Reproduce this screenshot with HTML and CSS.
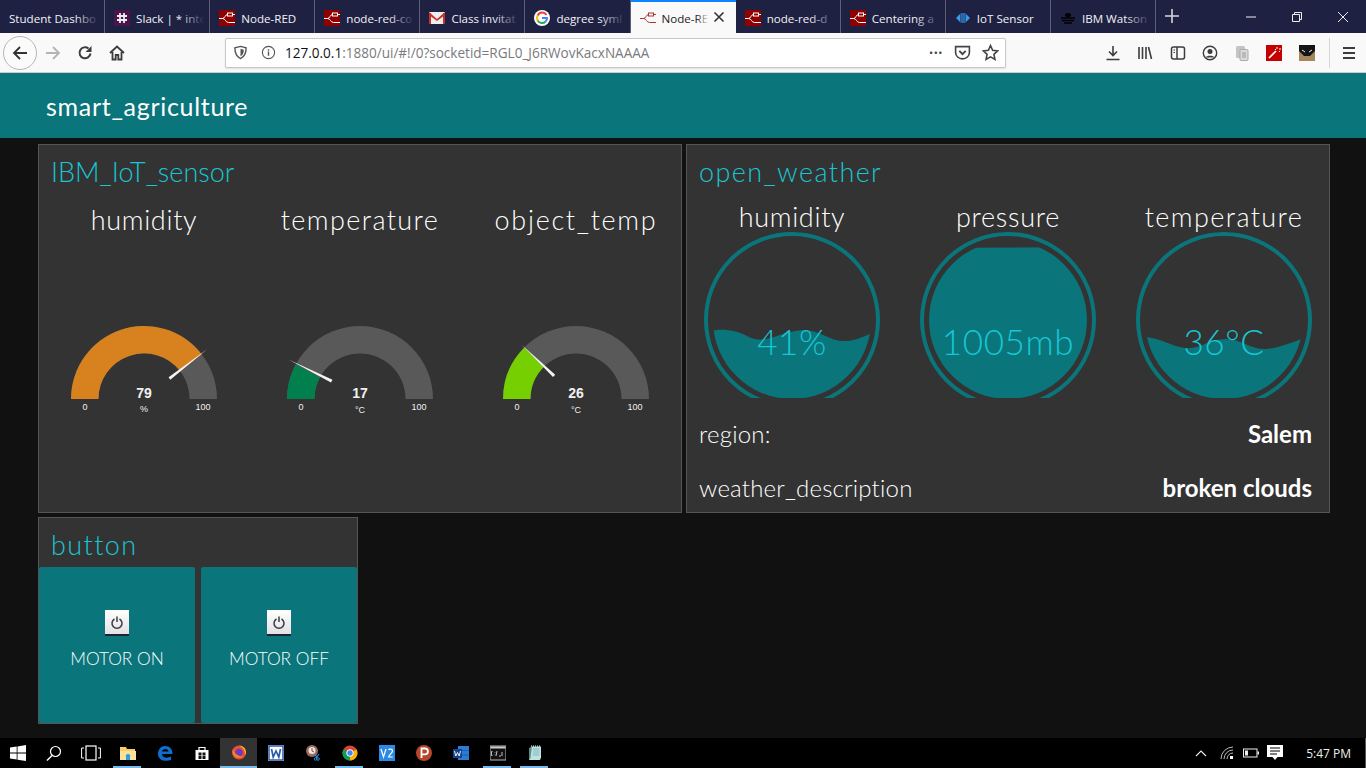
FILE: index.html
```html
<!DOCTYPE html>
<html lang="en">
<head>
    <meta charset="UTF-8">
    <meta name="viewport" content="width=device-width, initial-scale=1.0">
    <title>Node-RED Dashboard</title>
    <link rel="stylesheet" href="styles.css">
</head>

<body>
    <svg class="defs" width="0" height="0">
        <symbol id="nr" viewBox="0 0 16 16">
            <rect width="16" height="16" fill="#8f0000"/>
            <path d="M0 8.500h3.500C6 8.500 6 4.500 8.500 4.500M3.500 8.500c3 0 3 4 6 4H16M13 4.500h3" fill="none" stroke="#fff" stroke-width="1"/>
            <rect x="8.500" y="3" width="5" height="3" fill="none" stroke="#fff" stroke-width="1"/>
        </symbol>
        <symbol id="nr-light" viewBox="0 0 16 16">
            <path d="M0 8.500h3.500C6 8.500 6 4.500 8.500 4.500M3.500 8.500c3 0 3 4 6 4H16M13 4.500h3" fill="none" stroke="#a33" stroke-width="1"/>
            <rect x="8.500" y="3" width="5" height="3" fill="none" stroke="#a33" stroke-width="1"/>
        </symbol>
        <symbol id="power" viewBox="0 0 24 26">
            <rect width="24" height="24" fill="url(#btn)"/>
            <rect y="24" width="24" height="2" fill="#1c2433"/>
            <path d="M9.500 9a5 5 0 1 0 5 0" fill="none" stroke="#3c3c3c" stroke-width="1.500"/>
            <path d="M12 6.500v5.500" stroke="#3c3c3c" stroke-width="1.500"/>
        </symbol>
        <linearGradient id="btn" x1="0" y1="0" x2="0" y2="1">
            <stop offset="0" stop-color="#fff"/>
            <stop offset="1" stop-color="#e2e2e6"/>
        </linearGradient>
    </svg>

    <!-- browser tabs -->
    <div class="tabbar">
        <div class="tab"><span class="tab-label">Student Dashbo</span></div>
        <div class="tab">
            <svg class="favicon" viewBox="0 0 16 16"><rect width="16" height="16" fill="#4a154b"/><path d="M6 3v10M10 3v10M3 6h10M3 10h10" stroke="#eee" stroke-width="1.800"/></svg>
            <span class="tab-label">Slack | * inte</span>
        </div>
        <div class="tab"><svg class="favicon"><use href="#nr"/></svg><span class="tab-label">Node-RED</span></div>
        <div class="tab"><svg class="favicon"><use href="#nr"/></svg><span class="tab-label">node-red-co</span></div>
        <div class="tab">
            <svg class="favicon" viewBox="0 0 16 16"><rect y="2" width="16" height="12" fill="#eee"/><path d="M0 2l8 7 8-7v3l-8 6-8-6z" fill="#c9302c"/><path d="M0 3h2v11H0zM14 3h2v11h-2z" fill="#c9302c"/></svg>
            <span class="tab-label">Class invitat</span>
        </div>
        <div class="tab">
            <svg class="favicon" viewBox="0 0 16 16"><circle cx="8" cy="8" r="8" fill="#fff"/><path d="M12.500 5A5 5 0 0 0 3.600 5.600" fill="none" stroke="#ea4335" stroke-width="2"/><path d="M3.600 5.600a5 5 0 0 0 0 4.800" fill="none" stroke="#fbbc05" stroke-width="2"/><path d="M3.600 10.400A5 5 0 0 0 11.600 11.500" fill="none" stroke="#34a853" stroke-width="2"/><path d="M8 8h5a5 5 0 0 1-1.400 3.500" fill="none" stroke="#4285f4" stroke-width="2"/></svg>
            <span class="tab-label">degree syml</span>
        </div>
        <div class="tab tab-active">
            <svg class="favicon"><use href="#nr-light"/></svg>
            <span class="tab-label">Node-RE</span>
            <svg class="tab-close" viewBox="0 0 12 12"><path d="M1.500 1.500l9 9M10.500 1.500l-9 9" stroke="#333" stroke-width="1.600"/></svg>
        </div>
        <div class="tab"><svg class="favicon"><use href="#nr"/></svg><span class="tab-label">node-red-d</span></div>
        <div class="tab"><svg class="favicon"><use href="#nr"/></svg><span class="tab-label">Centering a</span></div>
        <div class="tab">
            <svg class="favicon" viewBox="0 0 16 16"><path d="M1 8l4-4v8zM15 8l-4-4v8z" fill="#3b9be8"/><rect x="5.500" y="3" width="5" height="10" rx="1" fill="#2f8ee0"/><path d="M7 3v10M9 3v10" stroke="#1e2142" stroke-width=".7"/></svg>
            <span class="tab-label tab-full">IoT Sensor</span>
        </div>
        <div class="tab">
            <svg class="favicon" viewBox="0 0 16 16"><ellipse cx="8" cy="5" rx="3" ry="2" fill="#000"/><path d="M1 8h14M2 10.500h12M4 13h8" stroke="#000" stroke-width="1.600"/></svg>
            <span class="tab-label">IBM Watson</span>
        </div>
        <svg class="tab-new" viewBox="0 0 14 14"><path d="M7 0v14M0 7h14" stroke="#d8d8de" stroke-width="1.600"/></svg>
        <div class="win-controls">
            <svg viewBox="0 0 12 12"><path d="M1 6h10" stroke="#eee" stroke-width="1"/></svg>
            <svg viewBox="0 0 12 12"><path d="M1.500 3.500h7v7h-7zM3.500 3.500v-2h7v7h-2" fill="none" stroke="#eee" stroke-width="1"/></svg>
            <svg viewBox="0 0 12 12"><path d="M1 1l10 10M11 1L1 11" stroke="#eee" stroke-width="1"/></svg>
        </div>
    </div>

    <!-- address bar row -->
    <div class="toolbar">
        <div class="nav-back">
            <svg viewBox="0 0 16 16"><path d="M15 8H2M8 2L2 8l6 6" fill="none" stroke="#333" stroke-width="1.800"/></svg>
        </div>
        <svg class="nav-icon" viewBox="0 0 16 16"><path d="M1 8h13M8 2l6 6-6 6" fill="none" stroke="#b4b4b6" stroke-width="1.800"/></svg>
        <svg class="nav-icon" viewBox="0 0 16 16"><path d="M13.500 8.500A5.500 5.500 0 1 1 11.500 3.500" fill="none" stroke="#3c3c3e" stroke-width="2"/><path d="M14.500 1v6h-6z" fill="#3c3c3e"/></svg>
        <svg class="nav-icon" viewBox="0 0 16 16"><path d="M1 8l7-6.500L15 8M3.500 7v7.500h3.200V10h2.600v4.500h3.200V7" fill="none" stroke="#3c3c3e" stroke-width="1.800"/></svg>

        <div class="urlbar">
            <svg class="url-shield" viewBox="0 0 16 16"><path d="M8 1.500l6 1.500c0 6-1.500 9.500-6 11.500C3.500 12.500 2 9 2 3z" fill="none" stroke="#555" stroke-width="1.500"/><path d="M8 4l3.500 1C11.500 8.500 10.500 10.500 8 12z" fill="#555"/></svg>
            <svg class="url-info" viewBox="0 0 16 16"><circle cx="8" cy="8" r="6.500" fill="none" stroke="#555" stroke-width="1.200"/><path d="M8 7v4.500M8 4.500v1.500" stroke="#555" stroke-width="1.500"/></svg>
            <span class="url-text"><span class="url-host">127.0.0.1</span>:1880/ui/#!/0?socketid=RGL0_J6RWovKacxNAAAA</span>
            <span class="url-dots">•••</span>
            <svg class="url-action" viewBox="0 0 16 16"><path d="M1.500 2.500h13V8a6.500 6 0 0 1-13 0z" fill="none" stroke="#444" stroke-width="1.500"/><path d="M5 6.500l3 3 3-3" fill="none" stroke="#444" stroke-width="1.800"/></svg>
            <svg class="url-action" viewBox="0 0 16 16"><path d="M8 1.500l2 4.500 4.800.5-3.600 3.200 1 4.800L8 12.100l-4.200 2.400 1-4.800L1.200 6.500 6 6z" fill="none" stroke="#444" stroke-width="1.500"/></svg>
        </div>

        <div class="tools">
            <svg viewBox="0 0 16 16"><path d="M8 1v9M4 6.500L8 10.500l4-4M1.500 14.500h13" fill="none" stroke="#3c3c3e" stroke-width="1.600"/></svg>
            <svg viewBox="0 0 16 16"><path d="M2 2v12M5.500 2v12M9 2v12M11.500 2l3 12" fill="none" stroke="#3c3c3e" stroke-width="1.600"/></svg>
            <svg viewBox="0 0 16 16"><rect x="1.500" y="2" width="13" height="12" rx="2" fill="none" stroke="#3c3c3e" stroke-width="1.500"/><path d="M7 2v12" stroke="#3c3c3e" stroke-width="1.500"/><path d="M3.500 5H5M3.500 7.500H5" stroke="#3c3c3e"/></svg>
            <svg viewBox="0 0 16 16"><circle cx="8" cy="8" r="6.700" fill="none" stroke="#3c3c3e" stroke-width="1.400"/><circle cx="8" cy="6.500" r="2.500" fill="#3c3c3e"/><path d="M3.500 12.500c1-2.500 8-2.500 9 0z" fill="#3c3c3e"/></svg>
            <svg viewBox="0 0 16 16"><rect x="2" y="1" width="9" height="12" rx="1.500" fill="#c4c4c4"/><rect x="6" y="4.500" width="8" height="11" rx="1" fill="#dadada" stroke="#aaa"/><path d="M8 8h4M8 10h4M8 12h4" stroke="#999"/></svg>
            <svg viewBox="0 0 16 16"><rect width="16" height="16" fill="#c40000"/><path d="M3 13l7-7" stroke="#fff" stroke-width="1.600"/><path d="M11 2v2M13 4h2M9 4l1 1M13 6l1 1" stroke="#fff"/></svg>
            <svg viewBox="0 0 16 16"><rect width="16" height="16" fill="#a5865c"/><path d="M0 0h16v6L11 11H5L0 6z" fill="#151515"/><path d="M3 5l3 2M13 5l-3 2" stroke="#eee" stroke-width="1"/></svg>
            <span class="tool-sep"></span>
            <svg viewBox="0 0 16 16"><path d="M2 3h12M2 8h12M2 13h12" stroke="#3c3c3e" stroke-width="1.800"/></svg>
        </div>
    </div>

    <!-- dashboard -->
    <header class="ui-header">smart_agriculture</header>

    <main class="ui-main">
        <section class="group">
            <h2 class="group-title title-tight">IBM_IoT_sensor</h2>
            <div class="widgets">
                <div class="gauge">
                    <div class="gauge-title title-tight">humidity</div>
                    <svg class="gauge-svg" viewBox="0 0 210 170">
                        <path class="arc-bg" d="M32 153a73 73 0 0 1 146 0h-27.500a45.500 45.500 0 0 0-91 0z"/>
                        <path d="M32 153a73 73 0 0 1 130.700-44.700l-21.700 16.800A45.500 45.500 0 0 0 59.500 153z" fill="#d7811f"/>
                        <path class="needle" d="M131.300 133.800l-1.700-2.500 38.500-28z"/>
                        <text class="g-value" x="105" y="152">79</text>
                        <text class="g-unit" x="105" y="166">%</text>
                        <text class="g-limit" x="46" y="164">0</text>
                        <text class="g-limit" x="164" y="164">100</text>
                    </svg>
                </div>
                <div class="gauge">
                    <div class="gauge-title">temperature</div>
                    <svg class="gauge-svg" viewBox="0 0 210 170">
                        <path class="arc-bg" d="M32 153a73 73 0 0 1 146 0h-27.500a45.500 45.500 0 0 0-91 0z"/>
                        <path d="M32 153a73 73 0 0 1 8.800-34.700l24 13.200A45.500 45.500 0 0 0 59.500 153z" fill="#017f4d"/>
                        <path class="needle" d="M76 136.500l1.500-2.800L34 113.800z"/>
                        <text class="g-value" x="105" y="152">17</text>
                        <text class="g-unit" x="105" y="167">°C</text>
                        <text class="g-limit" x="46" y="164">0</text>
                        <text class="g-limit" x="164" y="164">100</text>
                    </svg>
                </div>
                <div class="gauge">
                    <div class="gauge-title title-wide">object_temp</div>
                    <svg class="gauge-svg" viewBox="0 0 210 170">
                        <path class="arc-bg" d="M32 153a73 73 0 0 1 146 0h-27.500a45.500 45.500 0 0 0-91 0z"/>
                        <path d="M32 153a73 73 0 0 1 21.300-51.600l19.500 19.600A45.500 45.500 0 0 0 59.500 153z" fill="#76cf00"/>
                        <path class="needle" d="M82 131l2.200-2.200-33.600-30z"/>
                        <text class="g-value" x="105" y="152">26</text>
                        <text class="g-unit" x="105" y="167">°C</text>
                        <text class="g-limit" x="46" y="164">0</text>
                        <text class="g-limit" x="164" y="164">100</text>
                    </svg>
                </div>
            </div>
        </section>

        <section class="group">
            <h2 class="group-title">open_weather</h2>
            <div class="widgets">
                <div class="liquid">
                    <div class="liquid-title title-tight">humidity</div>
                    <svg class="liquid-svg" viewBox="0 0 210 166">
                        <clipPath id="clip-a"><circle cx="105" cy="88" r="79"/></clipPath>
                        <circle class="ring" cx="105" cy="88" r="86"/>
                        <path class="fill" clip-path="url(#clip-a)" d="M20 100C32 96 48 97 62 105C80 113 90 100 116 98C132 97 142 110 160 109C170 108 178 104 192 98L192 170L20 170Z"/>
                        <text class="l-value" x="105" y="123">41%</text>
                    </svg>
                </div>
                <div class="liquid">
                    <div class="liquid-title title-tight">pressure</div>
                    <svg class="liquid-svg" viewBox="0 0 210 166">
                        <clipPath id="clip-b"><circle cx="105" cy="88" r="79"/></clipPath>
                        <circle class="ring" cx="105" cy="88" r="86"/>
                        <path class="fill" clip-path="url(#clip-b)" d="M0 16L210 15L210 170L0 170Z"/>
                        <text class="l-value" x="105" y="123">1005mb</text>
                    </svg>
                </div>
                <div class="liquid">
                    <div class="liquid-title">temperature</div>
                    <svg class="liquid-svg" viewBox="0 0 210 166">
                        <clipPath id="clip-c"><circle cx="105" cy="88" r="79"/></clipPath>
                        <circle class="ring" cx="105" cy="88" r="86"/>
                        <path class="fill" clip-path="url(#clip-c)" d="M20 105C40 104 50 114 66 116C80 118 90 107 107 107C122 107 132 118 148 117C160 116 172 111 190 104L190 170L20 170Z"/>
                        <text class="l-value" x="105" y="123">36°C</text>
                    </svg>
                </div>
            </div>
            <div class="text-row"><span>region:</span><strong>Salem</strong></div>
            <div class="text-row"><span>weather_description</span><strong>broken clouds</strong></div>
        </section>

        <section class="group group-small">
            <h2 class="group-title">button</h2>
            <div class="buttons">
                <button class="motor-btn"><svg class="power-icon"><use href="#power"/></svg>MOTOR ON</button>
                <button class="motor-btn"><svg class="power-icon"><use href="#power"/></svg>MOTOR OFF</button>
            </div>
        </section>
    </main>

    <!-- windows taskbar -->
    <footer class="taskbar">
        <div class="task"><svg viewBox="0 0 16 16"><path d="M0 2.500l6.700-1v6H0zM7.500 1.400L16 0v7.500H7.500zM0 8.500h6.700v6L0 13.500zM7.500 8.500H16V16l-8.500-1.300z" fill="#fff"/></svg></div>
        <div class="task"><svg viewBox="0 0 16 16"><circle cx="9.500" cy="6.500" r="5" fill="none" stroke="#fff" stroke-width="1.200"/><path d="M6 10.500L1 15.500" stroke="#fff" stroke-width="1.400"/></svg></div>
        <div class="task task-view"><svg viewBox="0 0 20 16"><rect x="5" y="1" width="10" height="14" fill="none" stroke="#fff" stroke-width="1.200"/><path d="M3 3H.6v10H3M17 3h2.400v10H17" fill="none" stroke="#fff"/></svg></div>
        <div class="task task-open"><svg viewBox="0 0 16 16"><path d="M0 2h6l1 2h8v11H0z" fill="#f7cf62"/><path d="M0 6h16v9H0z" fill="#fbe29a"/><path d="M6 15v-4h4v4z" fill="#2d9fd8"/><path d="M5 11l3-2.500 3 2.500z" fill="#2d9fd8"/></svg></div>
        <div class="task"><svg viewBox="0 0 16 16"><path d="M8 1c5 0 7.500 3.500 7.500 8H5c0 4 5.500 4.500 9 2.500v3.500c-5.500 2-13 .5-13-6C1 4.500 4 1 8 1zM5 6.500h6.500C11.500 3 5.500 3 5 6.500z" fill="#0c6fd0"/></svg></div>
        <div class="task"><svg viewBox="0 0 16 16"><path d="M1.500 5h13v10h-13z" fill="#fff"/><path d="M5 5V2.500h6V5" fill="none" stroke="#fff" stroke-width="1.200"/><path d="M4.500 7.500h3v3h-3zM8.500 7.500h3v3h-3zM4.500 11h3v3h-3zM8.500 11h3v3h-3z" fill="#111"/></svg></div>
        <div class="task task-active"><svg viewBox="0 0 16 16"><circle cx="8" cy="8.500" r="7" fill="#e8522f"/><path d="M8 1.500c4 0 7 3 7 7 0 1-.2 2-.6 2.800C14 6 11.500 3 8 1.500z" fill="#ffb02e"/><circle cx="8" cy="8.500" r="3.800" fill="#6b3ac2"/><path d="M2 5c1 4 5 8 10 7-2 2-7 3-9.500-1C1.500 9 1.500 7 2 5z" fill="#f5842b"/></svg></div>
        <div class="task"><svg viewBox="0 0 16 16"><rect width="16" height="16" fill="#dfe8f5"/><rect x="1" y="1" width="14" height="14" fill="#fff" stroke="#2a5ba8" stroke-width="1.500"/><path d="M3.500 4l1.700 8 2.800-6 2.800 6 1.700-8" fill="none" stroke="#2a5ba8" stroke-width="1.700"/></svg></div>
        <div class="task"><svg viewBox="0 0 16 16"><circle cx="7" cy="6" r="6" fill="#9d6a55"/><circle cx="7" cy="5.500" r="3.500" fill="#e8e8e8"/><path d="M7 3v3l2 1" stroke="#944" fill="none"/><path d="M10 9l2 4M14 9l-3 4" stroke="#2a86d8" stroke-width="1.200"/><circle cx="10.500" cy="14" r="1.300" fill="none" stroke="#2a86d8"/><circle cx="13" cy="14" r="1.300" fill="none" stroke="#2a86d8"/></svg></div>
        <div class="task task-open"><svg viewBox="0 0 16 16"><circle cx="8" cy="8" r="7.500" fill="#db4437"/><path d="M8 8l6.500-3.700A7.500 7.500 0 0 1 8 15.500z" fill="#f4b400"/><path d="M8 8L1.500 4.200A7.500 7.500 0 0 0 8 15.500z" fill="#0f9d58"/><circle cx="8" cy="8" r="3.300" fill="#4285f4" stroke="#fff"/></svg></div>
        <div class="task"><svg viewBox="0 0 16 16"><rect width="16" height="16" fill="#2b8ae6"/><path d="M2 4l2.500 8L7 4M9.500 5c1-1.500 4-1.200 4 1 0 2-3.500 3.500-4 6h4.200" fill="none" stroke="#fff" stroke-width="1.200"/></svg></div>
        <div class="task"><svg viewBox="0 0 16 16"><circle cx="8" cy="8" r="8" fill="#b5472a"/><path d="M5.500 13V3.500h3.500a2.800 2.800 0 0 1 0 5.800H5.500" fill="none" stroke="#fff" stroke-width="1.800"/></svg></div>
        <div class="task"><svg viewBox="0 0 16 16"><path d="M5 1h11v14H5z" fill="#2b7cd3"/><path d="M5 5.500h11M5 10h11" stroke="#1d5fb0"/><rect y="4" width="9" height="9" fill="#15448f"/><path d="M1.500 6l1.300 5 1.700-3.500L6.200 11l1.300-5" fill="none" stroke="#fff" stroke-width=".9"/></svg></div>
        <div class="task task-open"><svg viewBox="0 0 16 16"><rect width="16" height="14" y="1" fill="#111" stroke="#bbb"/><rect x=".5" y="1.500" width="15" height="2" fill="#ccc"/><path d="M2.500 6.500h-1v4h1M5 7v.6M5 9.500v.6M7 6l-1 5M9 11h2M12 7v4" stroke="#eee" stroke-width=".8" fill="none"/></svg></div>
        <div class="task task-open"><svg viewBox="0 0 16 16"><path d="M4 1.500h10v11l-1 2.500H2z" fill="#bfe3e0"/><path d="M5 1.500L3.500 13l-1.500 2V3z" fill="#5a8d8a"/><path d="M6 4h6.500M6 6h6.500M6 8h6.500M5.800 10h6.500" stroke="#6aa" stroke-width=".7"/><path d="M4 1h10" stroke="#fff" stroke-dasharray="1 1"/></svg></div>

        <div class="tray">
            <svg class="tray-caret" viewBox="0 0 12 8"><path d="M1 7l5-5 5 5" fill="none" stroke="#eee" stroke-width="1.100"/></svg>
            <svg class="tray-wifi" viewBox="0 0 14 14"><path d="M1 13A12 12 0 0 1 13 1M4 13a9 9 0 0 1 9-9M7 13a6 6 0 0 1 6-6" fill="none" stroke="#bbb" stroke-width="1"/><rect x="10" y="10" width="3" height="3" fill="#fff"/></svg>
            <svg class="tray-batt" viewBox="0 0 16 10"><rect x=".5" y="1" width="13.500" height="8" fill="none" stroke="#eee"/><rect x="2" y="2.500" width="3" height="5" fill="#eee"/><rect x="14.500" y="3.500" width="1.500" height="3" fill="#eee"/></svg>
            <svg class="tray-note" viewBox="0 0 16 16"><path d="M0 0h16v12h-5.500L8 15l-2.500-3H0z" fill="#fff"/><path d="M3 3h10M3 6h10M3 9h7" stroke="#000"/></svg>
            <span class="tray-time">5:47 PM</span>
            <span class="tray-edge"></span>
        </div>
    </footer>
</body>
</html>
```

FILE: styles.css
```css
* {
    box-sizing: border-box;
}

html, body {
    height: 100%;
}

body {
    margin: 0;
    display: flex;
    flex-direction: column;
    overflow: hidden;
    background-color: #111111;
    font-family: "Lato", "Liberation Sans", sans-serif;
}

.defs {
    position: absolute;
}

/* browser tabs */
.tabbar {
    display: flex;
    align-items: stretch;
    height: 33px;
    background-color: #1e2142;
    font-family: "Open Sans", "Liberation Sans", sans-serif;
    font-size: 11.6px;
    color: #f2f2f6;
}

.tab {
    position: relative;
    display: flex;
    align-items: center;
    gap: 6px;
    width: 105.1px;
    padding: 3px 0 0 9px;
    border-right: 1px solid #5c5f78;
    overflow: hidden;
    white-space: nowrap;
}
.tab::after {
    content: "";
    position: absolute;
    top: 2px;
    right: 0;
    bottom: 0;
    width: 30px;
    background: linear-gradient(to right, rgba(30, 33, 66, 0), #1e2142 85%);
}
.tab:nth-child(3)::after,
.tab:nth-child(10)::after {
    display: none;
}

.tab-active {
    background-color: #f9f9fa;
    color: #222;
    border-top: 2px solid #0a84ff;
    border-right: 0;
    padding-top: 1px;
}
.tab-active::after {
    right: 24px;
    width: 16px;
    background: linear-gradient(to right, rgba(249, 249, 250, 0), #f9f9fa 85%);
}

.favicon {
    flex: none;
    width: 16px;
    height: 16px;
}

.tab-close {
    position: absolute;
    right: 11px;
    top: 9px;
    width: 12px;
    height: 12px;
    z-index: 1;
}

.tab-new {
    width: 14px;
    height: 14px;
    margin: 9px 0 0 9px;
}

.win-controls {
    display: flex;
    margin-left: auto;
    margin-right: 17px;
    gap: 34px;
    align-items: center;
}
.win-controls svg {
    width: 12px;
    height: 12px;
}

/* address bar row */
.toolbar {
    display: flex;
    align-items: center;
    height: 40px;
    padding: 0 0 0 3px;
    background-color: #f9f9fa;
    border-bottom: 1px solid #ccc;
}

.nav-back {
    display: flex;
    align-items: center;
    justify-content: center;
    width: 34px;
    height: 34px;
    border: 1px solid #b5b5b7;
    border-radius: 50%;
    background-color: #fbfbfb;
}
.nav-back svg {
    width: 16px;
    height: 16px;
}

.nav-icon {
    width: 16px;
    height: 16px;
    margin-left: 16px;
}
.nav-icon:first-of-type {
    margin-left: 8px;
}

.urlbar {
    display: flex;
    align-items: center;
    width: 781px;
    height: 30px;
    margin-left: 100px;
    padding: 0 6px 0 7px;
    background-color: #fff;
    border: 1px solid #c8c8ca;
    border-radius: 2px;
    box-shadow: 0 1px 2px rgba(0, 0, 0, .1);
    font-family: "Open Sans", "Liberation Sans", sans-serif;
    font-size: 13.55px;
    color: #7a7a7e;
}

.url-shield,
.url-info {
    flex: none;
    width: 15px;
    height: 15px;
}
.url-info {
    margin-left: 13px;
}

.url-text {
    margin-left: 9px;
    white-space: nowrap;
}
.url-host {
    color: #111;
}

.url-dots {
    margin-left: auto;
    font-size: 11px;
    letter-spacing: .5px;
    color: #444;
}

.url-action {
    width: 17px;
    height: 17px;
    margin-left: 11px;
}

.tools {
    display: flex;
    align-items: center;
    gap: 16.3px;
    margin-left: 99px;
}
.tools svg {
    flex: none;
    width: 16px;
    height: 16px;
}

.tool-sep {
    width: 1px;
    height: 30px;
    background-color: #d5d5d7;
    margin: 0 -5px 0 -2px;
}

/* dashboard */
.ui-header {
    display: flex;
    align-items: center;
    height: 65px;
    padding-left: 46px;
    background-color: #0a757b;
    color: #fff;
    font-size: 25px;
    letter-spacing: .7px;
}

.ui-main {
    flex: 1;
    display: grid;
    grid-template-columns: 644px 644px;
    grid-auto-rows: min-content;
    gap: 4px;
    padding: 6px 0 0 38px;
    color: #fff;
}

.group {
    background-color: #333333;
    border: 1px solid #555555;
}

.group-small {
    width: 320px;
}

.group-title {
    margin: 0;
    height: 49px;
    padding-left: 12px;
    line-height: 53px;
    font-size: 27px;
    font-weight: 300;
    letter-spacing: 1.4px;
    color: #18c6d4;
}

.widgets {
    display: flex;
    gap: 6px;
}

.gauge,
.liquid {
    width: 210px;
    flex: none;
    text-align: center;
}

.gauge {
    height: 222px;
}

.liquid {
    height: 210px;
}

.gauge-title {
    height: 52px;
    line-height: 51px;
    font-size: 27px;
    font-weight: 300;
    letter-spacing: 1.4px;
}

.liquid-title {
    height: 38px;
    line-height: 45px;
    font-size: 27px;
    font-weight: 300;
    letter-spacing: 1.4px;
}

.group-title.title-tight {
    letter-spacing: 0;
}
.gauge-title.title-tight,
.liquid-title.title-tight {
    letter-spacing: .7px;
}
.gauge-title.title-wide {
    letter-spacing: 1.7px;
}

.gauge-svg {
    display: block;
    width: 210px;
    height: 170px;
    font-family: "Liberation Sans", Arial, sans-serif;
}

.arc-bg {
    fill: #595959;
}

.needle {
    fill: #f4f4f4;
}

.gauge-svg text {
    text-anchor: middle;
    fill: #f0f0f0;
}

.g-value {
    font-size: 14px;
    font-weight: 700;
}

.g-unit {
    font-size: 9px;
}

.g-limit {
    font-size: 9px;
}

.liquid-svg {
    display: block;
    width: 210px;
    height: 166px;
}

.ring {
    fill: none;
    stroke: #0a757b;
    stroke-width: 4;
}

.fill {
    fill: #0a757b;
}

.l-value {
    text-anchor: middle;
    font-size: 35px;
    font-weight: 300;
    letter-spacing: .6px;
    fill: #18c6d4;
}

.text-row {
    display: flex;
    justify-content: space-between;
    align-items: center;
    height: 48px;
    margin-top: 6px;
    padding: 0 17px 2px 12px;
    font-size: 24px;
    font-weight: 300;
    letter-spacing: .2px;
}
.text-row strong {
    font-weight: 700;
    letter-spacing: 0;
}

.buttons {
    display: flex;
    gap: 6px;
}

.motor-btn {
    display: flex;
    flex-direction: column;
    align-items: center;
    width: 156px;
    height: 156px;
    padding: 43px 0 0 0;
    border: 0;
    border-radius: 2px;
    background-color: #0a757b;
    color: #fff;
    font-family: inherit;
    font-size: 17.3px;
    font-weight: 300;
}

.power-icon {
    width: 24px;
    height: 26px;
    margin-bottom: 12px;
}

/* windows taskbar */
.taskbar {
    display: flex;
    align-items: stretch;
    height: 30px;
    margin-top: auto;
    background-color: #000;
}

.task {
    position: relative;
    display: flex;
    align-items: center;
    justify-content: center;
    width: 37px;
    flex: none;
}
.task:nth-child(-n+2) {
    width: 36px;
}
.task svg {
    width: 16px;
    height: 16px;
}
.task-view svg {
    width: 20px;
}

.task-open::after {
    content: "";
    position: absolute;
    left: 4px;
    right: 5px;
    bottom: 0;
    height: 2px;
    background-color: #76b9ed;
}

.task-active {
    background-color: #333;
    border-bottom: 2px solid #76b9ed;
}

.tray {
    display: flex;
    align-items: center;
    margin-left: auto;
    color: #eee;
    font-family: "Open Sans", "Liberation Sans", sans-serif;
    font-size: 12px;
}

.tray-caret {
    width: 12px;
    height: 8px;
}
.tray-wifi {
    width: 14px;
    height: 14px;
    margin-left: 13px;
}
.tray-batt {
    width: 16px;
    height: 10px;
    margin-left: 9px;
}
.tray-note {
    width: 16px;
    height: 16px;
    margin-left: 8px;
}
.tray-time {
    margin-left: 23px;
}
.tray-edge {
    width: 1px;
    height: 30px;
    margin-left: 14px;
    background-color: #555;
}
```
